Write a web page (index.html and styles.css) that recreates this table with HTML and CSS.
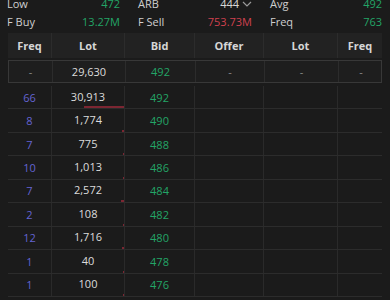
FILE: index.html
```html
<!DOCTYPE html>
<html>
<head>
<meta charset="utf-8">
<link rel="stylesheet" href="styles.css">
</head>
<body>
<div class="page">
  <div class="stats">
    <div class="stat"><span class="lbl">Low</span><span class="val up">472</span></div>
    <div class="stat"><span class="lbl">ARB</span><span class="val plain">444 <svg class="chev" width="10" height="6" viewBox="0 0 10 6"><path d="M1 1 L5 5 L9 1" fill="none" stroke="#9a9a9a" stroke-width="1.2"/></svg></span></div>
    <div class="stat"><span class="lbl">Avg</span><span class="val up">492</span></div>
    <div class="stat"><span class="lbl">F Buy</span><span class="val up">13.27M</span></div>
    <div class="stat"><span class="lbl">F Sell</span><span class="val down">753.73M</span></div>
    <div class="stat"><span class="lbl">Freq</span><span class="val up">763</span></div>
  </div>

  <div class="book">
    <div class="row head">
      <div class="c">Freq</div><div class="c">Lot</div><div class="c">Bid</div><div class="c">Offer</div><div class="c">Lot</div><div class="c">Freq</div>
    </div>
    <div class="row best">
      <div class="c dash">-</div><div class="c">29,630</div><div class="c up">492</div><div class="c dash">-</div><div class="c dash">-</div><div class="c dash">-</div>
    </div>
    <div class="rows">
      <div class="row"><div class="c fq">66</div><div class="c lot"><span class="t">30,913</span><span class="bar" style="width:40px"></span></div><div class="c up">492</div><div class="c"></div><div class="c"></div><div class="c"></div></div>
      <div class="row"><div class="c fq">8</div><div class="c lot"><span class="t">1,774</span><span class="bar" style="width:2.3px"></span></div><div class="c up">490</div><div class="c"></div><div class="c"></div><div class="c"></div></div>
      <div class="row"><div class="c fq">7</div><div class="c lot"><span class="t">775</span><span class="bar" style="width:1px"></span></div><div class="c up">488</div><div class="c"></div><div class="c"></div><div class="c"></div></div>
      <div class="row"><div class="c fq">10</div><div class="c lot"><span class="t">1,013</span><span class="bar" style="width:1.3px"></span></div><div class="c up">486</div><div class="c"></div><div class="c"></div><div class="c"></div></div>
      <div class="row"><div class="c fq">7</div><div class="c lot"><span class="t">2,572</span><span class="bar" style="width:3.3px"></span></div><div class="c up">484</div><div class="c"></div><div class="c"></div><div class="c"></div></div>
      <div class="row"><div class="c fq">2</div><div class="c lot"><span class="t">108</span><span class="bar" style="width:1px"></span></div><div class="c up">482</div><div class="c"></div><div class="c"></div><div class="c"></div></div>
      <div class="row"><div class="c fq">12</div><div class="c lot"><span class="t">1,716</span><span class="bar" style="width:2.2px"></span></div><div class="c up">480</div><div class="c"></div><div class="c"></div><div class="c"></div></div>
      <div class="row"><div class="c fq">1</div><div class="c lot"><span class="t">40</span><span class="bar" style="width:1px"></span></div><div class="c up">478</div><div class="c"></div><div class="c"></div><div class="c"></div></div>
      <div class="row"><div class="c fq">1</div><div class="c lot"><span class="t">100</span><span class="bar" style="width:1px"></span></div><div class="c up">476</div><div class="c"></div><div class="c"></div><div class="c"></div></div>
    </div>
  </div>
</div>
</body>
</html>
```
FILE: styles.css
```css
html, body {
  margin: 0;
  padding: 0;
  background: #1b1b1b;
  overflow: hidden;
}
body {
  font-family: "Open Sans", "Liberation Sans", sans-serif;
  font-size: 11px;
  color: #dcdcdc;
}
.page {
  margin-top: -6px;
  padding: 0 8px 0 7px;
}
.stats {
  display: grid;
  grid-template-columns: 113px 114px 112px;
  column-gap: 18px;
}
.stat {
  display: flex;
  justify-content: space-between;
  align-items: center;
  height: 18px;
}
.lbl { color: #cfcfcf; }
.val { display: flex; align-items: center; gap: 3px; }
.up { color: #23a567; }
.down { color: #d0414f; }
.plain { color: #d8d8d8; }
.chev { margin-top: 1px; }

.book {
  margin-top: 3px;
  margin-left: 1px;
  width: 374px;
}
.row {
  display: grid;
  grid-template-columns: 44px 73px 70px 69px 74px 44px;
}
.c {
  display: flex;
  align-items: center;
  justify-content: center;
  border-right: 1px solid #2a2a2a;
}
.c:last-child { border-right: none; }
.head {
  height: 25px;
  background: #222222;
  font-weight: 700;
  color: #d6d6d6;
}
.head .c { border-right-color: #2c2c2c; }
.best {
  margin-top: 2px;
  height: 23px;
  box-sizing: border-box;
  border: 1px solid #383838;
  background: #1e1e1e;
}
.best .c { border-right-color: #2c2c2c; }
.dash { color: #8a8a8a; }
.rows {
  margin-top: 3px;
}
.rows .row {
  height: 23.45px;
  box-sizing: border-box;
  border-bottom: 1px solid #2c2c2c;
}
.fq { color: #6464d2; }
.lot {
  flex-direction: column;
  align-items: stretch;
  justify-content: flex-end;
}
.lot .t {
  flex: 1;
  display: flex;
  align-items: center;
  justify-content: center;
}
.bar {
  align-self: flex-end;
  height: 2px;
  min-width: 1px;
  background: #7c2632;
}
```
